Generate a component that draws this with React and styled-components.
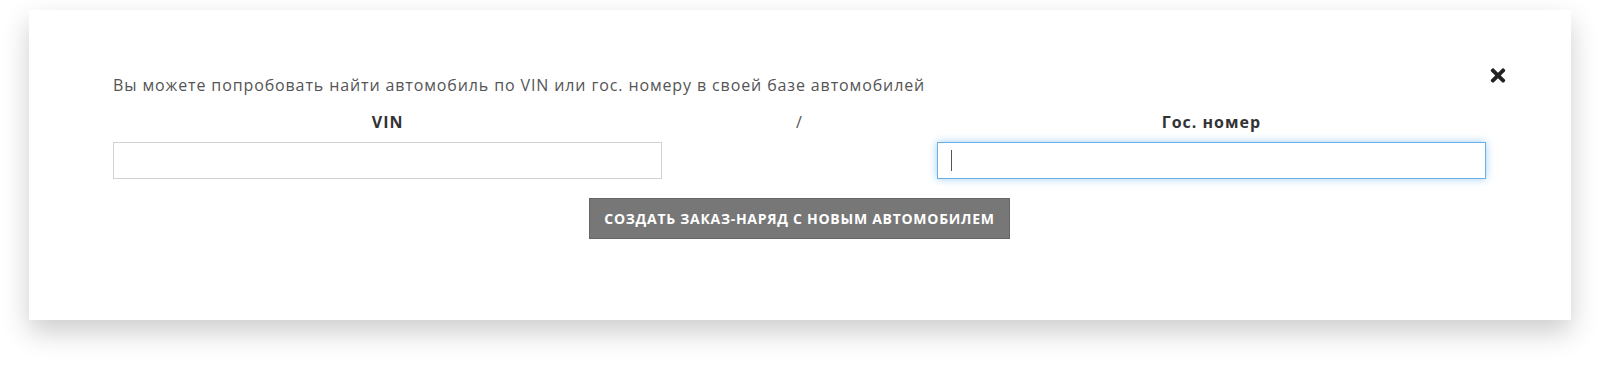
import React from "react";
import styled, { createGlobalStyle } from "styled-components";
import { FaTimes } from "react-icons/fa";

const GlobalStyle = createGlobalStyle`
  html, body {
    margin: 0;
    padding: 0;
    background: #fff;
  }
  body {
    font-family: "Open Sans", "Liberation Sans", sans-serif;
  }
`;

const Page = styled.div`
  padding: 10px 29px 48px 29px;
`;

const Modal = styled.div`
  position: relative;
  height: 310px;
  box-sizing: border-box;
  background: #fff;
  padding: 65px 85px 0 84px;
  box-shadow: 0 12px 26px rgba(0, 0, 0, 0.2);
`;

const CloseButton = styled.button`
  position: absolute;
  top: 54px;
  right: 63px;
  width: 20px;
  height: 22px;
  padding: 0;
  border: 0;
  background: none;
  color: #222;
  display: flex;
  align-items: center;
  justify-content: center;
  cursor: pointer;
`;

const Description = styled.p`
  margin: 0;
  font-size: 16px;
  line-height: 20px;
  letter-spacing: 0.88px;
  color: #555;
`;

const Form = styled.div`
  display: grid;
  grid-template-columns: 40% 20% 40%;
  grid-template-rows: 20px 37px;
  row-gap: 10px;
  margin-top: 17px;
`;

const Label = styled.div`
  text-align: center;
  font-size: 16px;
  line-height: 20px;
  letter-spacing: 1px;
  color: ${(p) => (p.$muted ? "#555" : "#333")};
  font-weight: ${(p) => (p.$muted ? 400 : 700)};
`;

const Field = styled.div`
  position: relative;
  grid-row: 2;
  grid-column: ${(p) => p.$col};
`;

const Input = styled.input`
  display: block;
  width: 100%;
  height: 37px;
  box-sizing: border-box;
  padding: 0 13px;
  font-family: inherit;
  font-size: 15px;
  color: #555;
  background: #fff;
  border: 1px solid ${(p) => (p.$focused ? "#66afe9" : "#d2d2d2")};
  border-radius: 0;
  outline: none;
  box-shadow: ${(p) =>
    p.$focused ? "0 0 8px rgba(102, 175, 233, 0.6)" : "none"};
`;

const Caret = styled.span`
  position: absolute;
  left: 14px;
  top: 8px;
  width: 1px;
  height: 21px;
  background: #555;
`;

const Actions = styled.div`
  display: flex;
  justify-content: center;
  margin-top: 19px;
`;

const SubmitButton = styled.button`
  height: 41px;
  padding: 0 14px;
  box-sizing: border-box;
  background: #777;
  border: 1px solid #666;
  border-radius: 0;
  color: #fff;
  font-family: inherit;
  font-size: 14px;
  font-weight: 700;
  letter-spacing: 0.72px;
  text-transform: uppercase;
  cursor: pointer;
`;

export default function App() {
  return (
    <>
      <GlobalStyle />
      <Page>
        <Modal>
          <CloseButton aria-label="Закрыть">
            <FaTimes size={21} />
          </CloseButton>
          <Description>
            Вы можете попробовать найти автомобиль по VIN или гос. номеру в
            своей базе автомобилей
          </Description>
          <Form>
            <Label>VIN</Label>
            <Label $muted>/</Label>
            <Label>Гос. номер</Label>
            <Field $col={1}>
              <Input type="text" />
            </Field>
            <Field $col={3}>
              <Input type="text" $focused />
              <Caret />
            </Field>
          </Form>
          <Actions>
            <SubmitButton>Создать заказ-наряд с новым автомобилем</SubmitButton>
          </Actions>
        </Modal>
      </Page>
    </>
  );
}
